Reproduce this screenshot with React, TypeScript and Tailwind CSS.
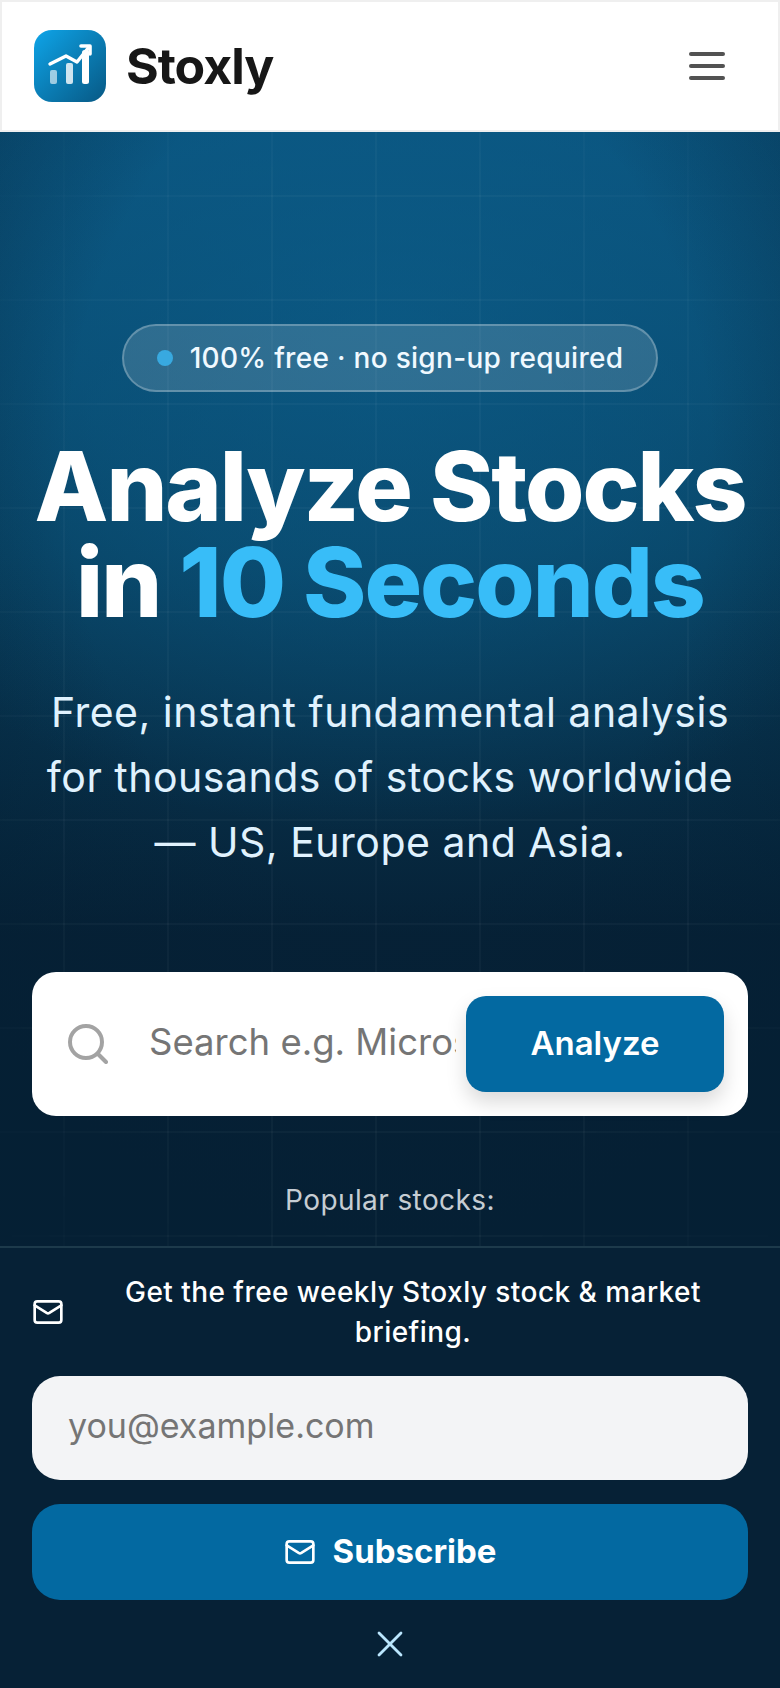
import { Mail, X } from "lucide-react";

function Logo() {
  return (
    <div className="w-[72px] h-[72px] rounded-[18px] bg-gradient-to-br from-[#0ea5e9] to-[#075985] shrink-0">
      <svg viewBox="0 0 72 72" className="w-full h-full" fill="none">
        <rect x="16" y="40" width="7" height="14" rx="2" fill="#fff" fillOpacity="0.6" />
        <rect x="32" y="33" width="7" height="21" rx="2" fill="#fff" fillOpacity="0.8" />
        <rect x="48" y="20" width="7" height="34" rx="2.5" fill="#fff" />
        <path d="M16 34l16-8 11 6 12-15" stroke="#fff" strokeWidth="3.4" strokeLinecap="round" strokeLinejoin="round" />
        <path d="M47 16h9v8" stroke="#fff" strokeWidth="3.6" strokeLinecap="round" strokeLinejoin="round" />
      </svg>
    </div>
  );
}

export default function App() {
  return (
    <div className="w-[780px] h-[1688px] flex flex-col overflow-hidden bg-[#062136] font-['Inter',sans-serif]">
      {/* Header */}
      <header className="h-[132px] shrink-0 bg-white border-2 border-[#efefef] flex items-center justify-between pl-8 pr-[53px]">
        <div className="flex items-center gap-[20px]">
          <Logo />
          <span className="text-[50px] font-bold tracking-[-1px] text-[#171717]">Stoxly</span>
        </div>
        <div className="w-9 flex flex-col gap-2">
          <span className="h-1 rounded-full bg-[#525252]" />
          <span className="h-1 rounded-full bg-[#525252]" />
          <span className="h-1 rounded-full bg-[#525252]" />
        </div>
      </header>

      {/* Hero */}
      <section className="relative flex-1 min-h-0 overflow-hidden bg-[#062136]">
        <div className="absolute inset-0 bg-[linear-gradient(180deg,#0a5078_0%,#083f5e_38%,#062136_72%)]" />
        <div className="absolute inset-0 bg-[radial-gradient(ellipse_80%_45%_at_50%_18%,rgba(12,98,145,0.6)_0%,rgba(12,98,145,0.4)_50%,rgba(6,33,54,0)_100%)]" />
        <div className="absolute inset-0 bg-[radial-gradient(ellipse_75%_70%_at_50%_30%,rgba(4,30,50,0)_55%,rgba(4,30,50,0.5)_100%)]" />
        <div className="absolute inset-0 bg-[linear-gradient(rgba(255,255,255,0.03)_2px,transparent_2px),linear-gradient(90deg,rgba(255,255,255,0.03)_2px,transparent_2px)] bg-[size:104px_104px] bg-[position:63px_63px] [mask-image:radial-gradient(ellipse_70%_80%_at_50%_50%,black_60%,transparent_100%)]" />

        <div className="relative flex flex-col items-center pt-[192px]">
          <div className="h-[68px] w-[536px] rounded-full border-2 border-white/25 bg-white/15 flex items-center justify-center gap-[17px]">
            <span className="w-4 h-4 rounded-full bg-[#38a9e0]" />
            <span className="text-[28px] font-medium tracking-[0.3px] text-[#f0f9ff]">100% free · no sign-up required</span>
          </div>

          <h1 className="mt-[46px] text-[96px] leading-[96px] font-extrabold tracking-[-2px] text-white text-center">
            Analyze Stocks
            <br />
            in <span className="text-[#38bdf8]">10 Seconds</span>
          </h1>

          <p className="mt-[50px] w-[716px] text-[41px] leading-[65px] tracking-[0.5px] text-[#e0f2fe] text-center">
            Free, instant fundamental analysis
            <br />
            for thousands of stocks worldwide
            <br />— US, Europe and Asia.
          </p>

          <div className="mt-[97px] w-[716px] h-[144px] rounded-[24px] bg-white flex items-center pl-9 pr-6">
            <svg viewBox="0 0 40 40" className="w-10 h-10 shrink-0" fill="none" stroke="#a3a3a3" strokeWidth="4" strokeLinecap="round">
              <circle cx="18" cy="18" r="16" />
              <path d="M30 30l8 8" />
            </svg>
            <input
              placeholder="Search e.g. Microsoft, Apple"
              className="ml-[41px] w-[307px] min-w-0 pb-1 outline-none text-[36.5px] text-[#171717] placeholder:text-[#757575]"
            />
            <button className="ml-[10px] w-[258px] h-24 rounded-[20px] bg-[#0369a1] text-white text-[33px] font-semibold shadow-[0_10px_20px_rgba(0,0,0,0.15)]">
              Analyze
            </button>
          </div>

          <p className="mt-[64px] text-[28px] leading-10 tracking-[0.4px] text-[#c6cdd3]">Popular stocks:</p>
        </div>
      </section>

      {/* Newsletter bar */}
      <div className="shrink-0 bg-[#062136] border-t-2 border-[#1d3a4b] px-8 pt-6 pb-[22px]">
        <div className="flex items-center">
          <Mail className="w-8 h-8 text-white shrink-0" strokeWidth={2} />
          <p className="flex-1 text-[28px] leading-10 font-medium tracking-[0.45px] text-white text-center pl-[14px]">
            Get the free weekly Stoxly stock &amp; market briefing.
          </p>
        </div>
        <input
          placeholder="you@example.com"
          className="mt-6 w-full h-[104px] rounded-[28px] bg-[#f3f4f6] px-9 pb-1.5 text-[34px] outline-none placeholder:text-[#757575]"
        />
        <button className="mt-6 w-full h-24 rounded-[28px] bg-[#0369a1] text-white flex items-center justify-center gap-[17px] text-[33px] font-bold">
          <Mail className="w-8 h-8" strokeWidth={2} />
          Subscribe
        </button>
        <div className="mt-[22px] flex justify-center">
          <X className="w-11 h-11 text-[#bae6fd]" strokeWidth={1.5} />
        </div>
      </div>
    </div>
  );
}
